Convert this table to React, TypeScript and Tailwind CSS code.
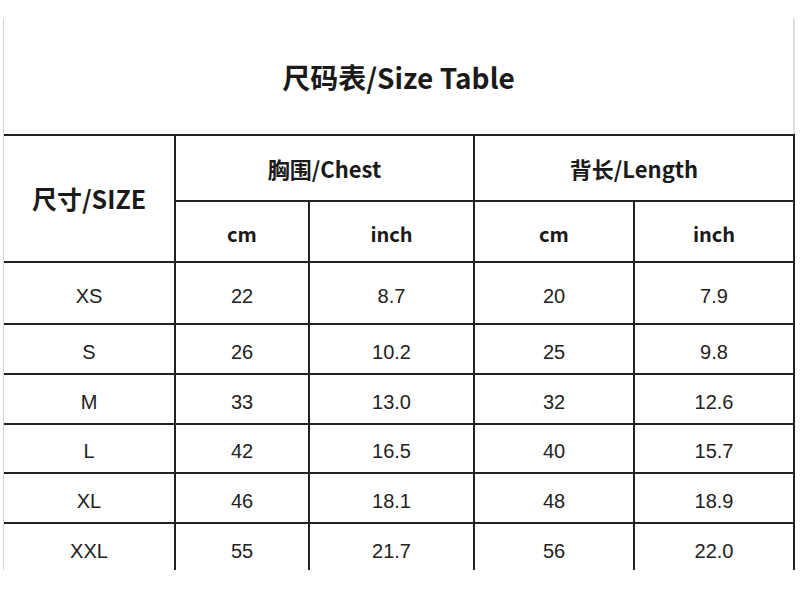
import React from "react";

const rows: [string, string, string, string, string][] = [
  ["XS", "22", "8.7", "20", "7.9"],
  ["S", "26", "10.2", "25", "9.8"],
  ["M", "33", "13.0", "32", "12.6"],
  ["L", "42", "16.5", "40", "15.7"],
  ["XL", "46", "18.1", "48", "18.9"],
  ["XXL", "55", "21.7", "56", "22.0"],
];

const cjk = "font-['Noto_Sans_CJK_SC','Noto_Sans',sans-serif]";
const data = "font-['Liberation_Sans',Arial,sans-serif]";

export default function App() {
  return (
    <div className="w-[800px] h-[600px] bg-white pt-[19px] pl-[3px] text-[#1a1a1a]">
      <div className="w-[792px] h-[551px] border-l border-[#d4d4d4] flex flex-col">
        <div
          className={`h-[115px] border-r-2 border-[#dcdcdc] flex items-center justify-center ${cjk} text-[28px] font-semibold`}
        >
          尺码表/Size Table
        </div>
        <div className="flex-1 overflow-hidden border-t-2 border-r-2 border-[#222] bg-[#222]">
          <div className="grid grid-cols-[170px_132px_163px_158px_158px] grid-rows-[64px_59px_60px_48px_48px_47px_48px_48px] gap-[2px]">
            <div
              className={`row-span-2 bg-white flex items-center justify-center ${cjk} text-[25px] font-semibold`}
            >
              尺寸/SIZE
            </div>
            <div
              className={`col-span-2 bg-white flex items-center justify-center ${cjk} text-[22px] font-semibold`}
            >
              胸围/Chest
            </div>
            <div
              className={`col-span-2 bg-white flex items-center justify-center ${cjk} text-[22px] font-semibold`}
            >
              背长/Length
            </div>
            {["cm", "inch", "cm", "inch"].map((t, i) => (
              <div
                key={i}
                className={`bg-white flex items-center justify-center pt-[4px] ${cjk} text-[20px] font-bold`}
              >
                {t}
              </div>
            ))}
            {rows.map((r, i) =>
              r.map((c, j) => (
                <div
                  key={`${i}-${j}`}
                  className={`bg-white flex items-center justify-center pt-[5px] ${data} text-[20px] text-[#222]`}
                >
                  {c}
                </div>
              ))
            )}
          </div>
        </div>
      </div>
    </div>
  );
}
